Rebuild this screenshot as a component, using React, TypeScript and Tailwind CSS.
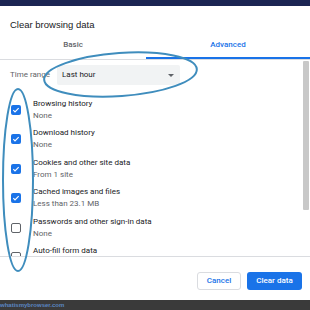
import { FC } from "react";

type Item = { title: string; sub: string; checked: boolean };

const items: Item[] = [
  { title: "Browsing history", sub: "None", checked: true },
  { title: "Download history", sub: "None", checked: true },
  { title: "Cookies and other site data", sub: "From 1 site", checked: true },
  { title: "Cached images and files", sub: "Less than 23.1 MB", checked: true },
  { title: "Passwords and other sign-in data", sub: "None", checked: false },
  { title: "Auto-fill form data", sub: "", checked: false },
];

const Check: FC<{ checked: boolean }> = ({ checked }) =>
  checked ? (
    <div className="w-[10px] h-[10px] rounded-[2px] bg-[#1a73e8] flex items-center justify-center shrink-0">
      <svg width="8" height="8" viewBox="0 0 24 24">
        <path d="M4 12.5l5 5L20 6.5" fill="none" stroke="#fff" strokeWidth="3.5" />
      </svg>
    </div>
  ) : (
    <div className="w-[10px] h-[10px] rounded-[2px] border-[1.5px] border-[#5f6368] shrink-0" />
  );

const Row: FC<Item> = ({ title, sub, checked }) => (
  <div className="h-[29.5px] flex items-center shrink-0">
    <div className="ml-[11px]">
      <Check checked={checked} />
    </div>
    <div className="ml-[12px] flex flex-col">
      <span className="text-[8px] leading-[12px] text-[#202124]">{title}</span>
      <span className="h-[12px] text-[8px] leading-[12px] text-[#5f6368]">{sub}</span>
    </div>
  </div>
);

const App: FC = () => {
  return (
    <div className="w-[310px] h-[310px] relative overflow-hidden bg-white flex flex-col font-['Roboto',sans-serif]">
      {/* top strip */}
      <div className="h-[6px] bg-[#1b2553] shrink-0" />

      {/* title */}
      <div className="pl-[10px] pt-[13px] text-[9.5px] leading-[12px] text-[#202124] shrink-0 font-['Liberation_Sans',sans-serif]">
        Clear browsing data
      </div>

      {/* tabs */}
      <div className="mt-[2px] flex border-b border-[#dadce0] shrink-0">
        <div className="w-[147px] h-[26px] flex items-center justify-center text-[8px] font-medium text-[#5f6368] pb-[2px]">
          Basic
        </div>
        <div className="w-[165px] flex flex-col">
          <div className="h-[24px] flex items-center justify-center text-[8px] font-medium text-[#1a73e8]">
            Advanced
          </div>
          <div className="h-[2px] bg-[#1a73e8]" />
        </div>
      </div>

      {/* scroll area */}
      <div className="flex-1 relative overflow-hidden border-b border-[#dadce0]">
        <div className="flex items-center mt-[5px] h-[20px]">
          <span className="ml-[10px] w-[47px] text-[8px] text-[#5f6368]">Time range</span>
          <div className="w-[123px] h-[20px] bg-[#f1f3f4] rounded-[2px] flex items-center justify-between px-[5px]">
            <span className="text-[8px] text-[#202124]">Last hour</span>
            <span className="w-0 h-0 border-l-[3.5px] border-r-[3.5px] border-t-[3.5px] border-l-transparent border-r-transparent border-t-[#5f6368] mr-[1px]" />
          </div>
        </div>
        <div className="mt-[10px] flex flex-col">
          {items.map((it) => (
            <Row key={it.title} {...it} />
          ))}
        </div>
        {/* scrollbar */}
        <div className="absolute right-[1px] top-[1px] w-[6px] h-[149px] bg-[#c8c8c8] rounded-[1px]" />
      </div>

      {/* footer */}
      <div className="h-[43px] flex justify-end items-start pt-[15px] pr-[8px] gap-[6px] shrink-0">
        <button className="w-[44px] h-[18px] rounded-[3px] border border-[#dadce0] bg-white text-[8px] font-medium text-[#1a73e8]">
          Cancel
        </button>
        <button className="w-[55px] h-[18px] rounded-[3px] bg-[#1a73e8] text-[8px] font-medium text-white">
          Clear data
        </button>
      </div>

      {/* bottom strip */}
      <div className="h-[10px] bg-[#3a3a3a] shrink-0 flex items-center">
        <span className="text-[6px] leading-[10px] font-bold text-[#5b86c0] font-['Liberation_Sans',sans-serif]">
          whatismybrowser.com
        </span>
      </div>

      {/* annotation marks */}
      <svg className="absolute inset-0 pointer-events-none" width="310" height="310" viewBox="0 0 310 310">
        <ellipse cx="120.5" cy="74.5" rx="76.5" ry="21.5" transform="rotate(-4 120.5 74.5)" fill="none" stroke="#3f8dbd" strokeWidth="2" />
        <ellipse cx="18" cy="180" rx="15" ry="91" fill="none" stroke="#3f8dbd" strokeWidth="2" />
      </svg>
    </div>
  );
};

export default App;
